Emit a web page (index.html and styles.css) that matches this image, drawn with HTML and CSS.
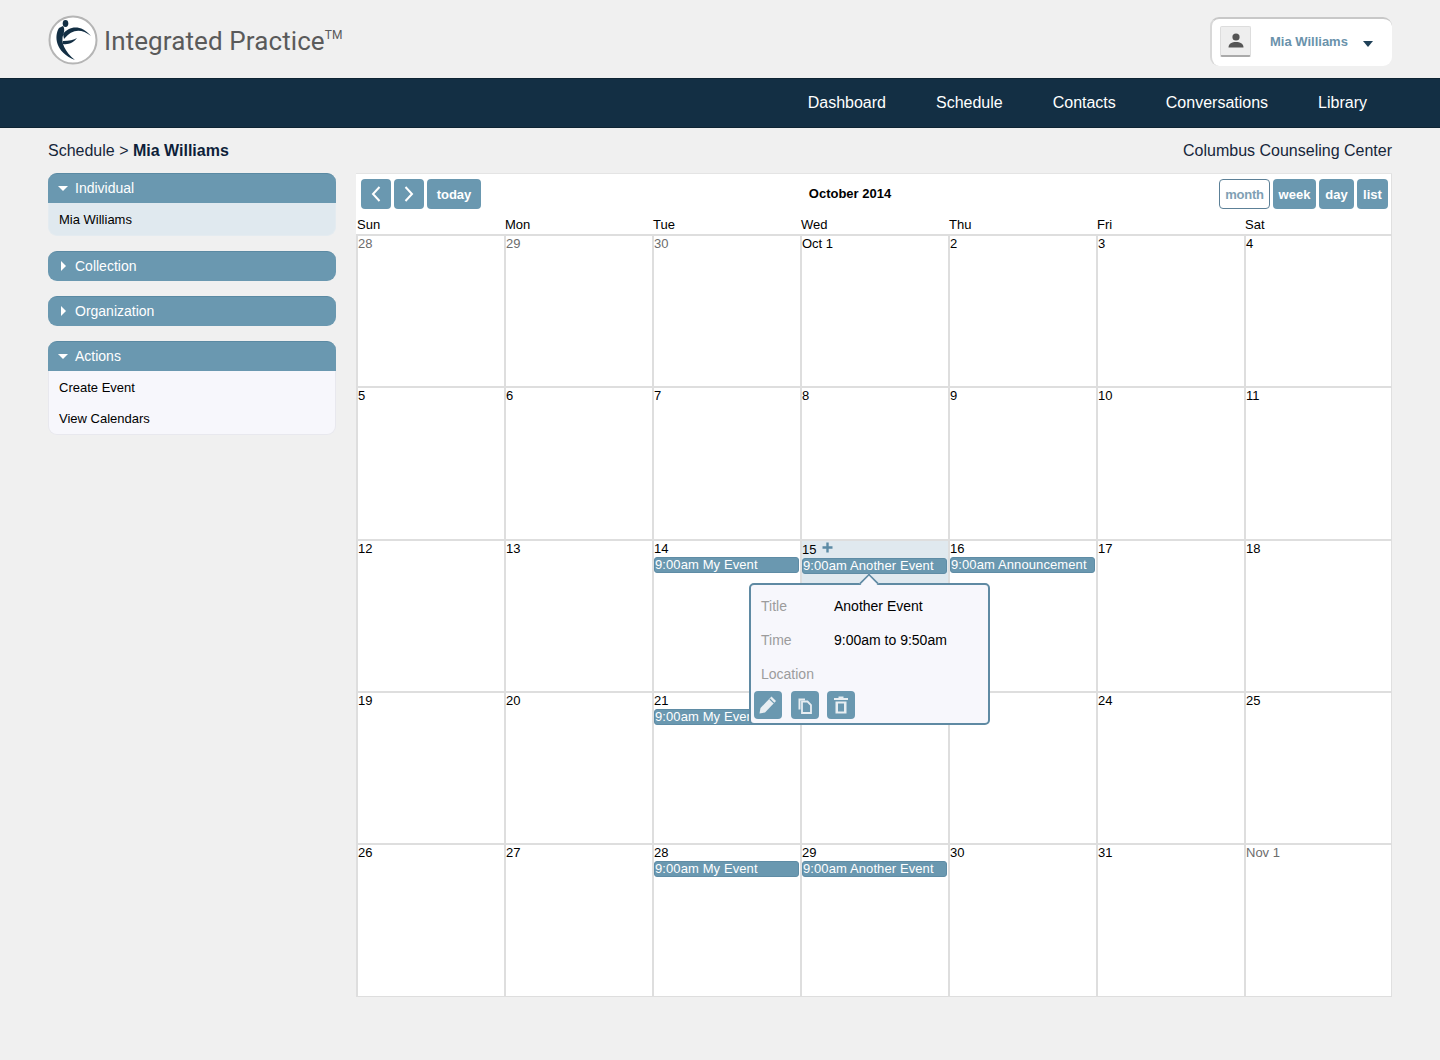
FILE: index.html
```html
<!DOCTYPE html>
<html lang="en">
<head>
<meta charset="utf-8">
<title>Integrated Practice - Schedule</title>
<link rel="stylesheet" href="styles.css">
</head>
<body>
<header class="top">
  <div class="brand">
    <svg class="logo" viewBox="0 0 50 50" width="50" height="50">
      <circle cx="25" cy="25" r="23.5" fill="#fff" stroke="#b5b5b5" stroke-width="2"/>
      <ellipse cx="17.5" cy="8.5" rx="2.8" ry="3.4" fill="#132f44"/>
      <path d="M11 13C6 21 7 37 27 45C17 37 12 27 15.5 19C17 15 16 12 15 11Z" fill="#132f44"/>
      <path d="M15 19C21 11 33 9 43 21C33 13 24 14 16 24Z" fill="#132f44"/>
      <path d="M15 29C21 30 26 27 29 23C26 25 21 26 15 26Z" fill="#132f44"/>
    </svg>
    <div class="brand-name">Integrated Practice<sup class="tm">TM</sup></div>
  </div>
  <div class="user">
    <div class="avatar">
      <svg viewBox="0 0 20 20" width="20" height="20"><circle cx="10" cy="6" r="3.6" fill="#555"/><path d="M2.5 16.5C2.5 12.5 6 11 10 11S17.500 12.500 17.500 16.500Z" fill="#555"/></svg>
    </div>
    <span class="user-name">Mia Williams</span>
    <span class="user-caret"></span>
  </div>
</header>
<nav class="nav">
  <a>Dashboard</a><a>Schedule</a><a>Contacts</a><a>Conversations</a><a>Library</a>
</nav>
<div class="crumbs">
  <div>Schedule &gt; <b>Mia Williams</b></div>
  <div>Columbus Counseling Center</div>
</div>
<main class="content">
  <aside class="side">
    <section class="panel">
      <h3 class="panel-head open"><i class="tri-down"></i>Individual</h3>
      <div class="panel-body tint"><a>Mia Williams</a></div>
    </section>
    <section class="panel">
      <h3 class="panel-head closed"><i class="tri-right"></i>Collection</h3>
    </section>
    <section class="panel">
      <h3 class="panel-head closed"><i class="tri-right"></i>Organization</h3>
    </section>
    <section class="panel">
      <h3 class="panel-head open"><i class="tri-down"></i>Actions</h3>
      <div class="panel-body"><a>Create Event</a><a>View Calendars</a></div>
    </section>
  </aside>
  <section class="cal">
    <div class="toolbar">
      <div class="btns">
        <button class="btn icon"><svg viewBox="0 0 16 20" width="16" height="20"><path d="M11.500 3L5 10L11.500 17" fill="none" stroke="#fff" stroke-width="2"/></svg></button>
        <button class="btn icon"><svg viewBox="0 0 16 20" width="16" height="20"><path d="M4.500 3L11 10L4.500 17" fill="none" stroke="#fff" stroke-width="2"/></svg></button>
        <button class="btn today">today</button>
      </div>
      <div class="cal-title">October 2014</div>
      <div class="btns">
        <button class="btn active month">month</button>
        <button class="btn week">week</button>
        <button class="btn day">day</button>
        <button class="btn list">list</button>
      </div>
    </div>
    <div class="dow"><div>Sun</div><div>Mon</div><div>Tue</div><div>Wed</div><div>Thu</div><div>Fri</div><div>Sat</div></div>
    <div class="grid">
      <div class="cell off"><span class="num">28</span></div>
      <div class="cell off"><span class="num">29</span></div>
      <div class="cell off"><span class="num">30</span></div>
      <div class="cell"><span class="num">Oct 1</span></div>
      <div class="cell"><span class="num">2</span></div>
      <div class="cell"><span class="num">3</span></div>
      <div class="cell"><span class="num">4</span></div>

      <div class="cell"><span class="num">5</span></div>
      <div class="cell"><span class="num">6</span></div>
      <div class="cell"><span class="num">7</span></div>
      <div class="cell"><span class="num">8</span></div>
      <div class="cell"><span class="num">9</span></div>
      <div class="cell"><span class="num">10</span></div>
      <div class="cell"><span class="num">11</span></div>

      <div class="cell"><span class="num">12</span></div>
      <div class="cell"><span class="num">13</span></div>
      <div class="cell"><span class="num">14</span><div class="ev">9:00am My Event</div></div>
      <div class="cell today-cell">
        <span class="num">15</span><svg class="plus" viewBox="0 0 11 11" width="11" height="11"><path d="M5.500 0.500V10.500M0.500 5.500H10.500" stroke="#5c8ba5" stroke-width="2.400"/></svg>
        <div class="ev">9:00am Another Event</div>
        <div class="pop">
          <span class="pop-arrow"></span>
          <dl class="pop-rows">
            <div class="pop-row"><dt>Title</dt><dd>Another Event</dd></div>
            <div class="pop-row"><dt>Time</dt><dd>9:00am to 9:50am</dd></div>
            <div class="pop-row"><dt>Location</dt><dd></dd></div>
          </dl>
          <div class="pop-actions">
            <button class="pop-btn"><svg viewBox="0 0 20 20" width="20" height="20"><path d="M13.500 1.500L18 6L7 17.500L1.500 18.500L2.500 13Z" fill="#e8eef2"/><path d="M11.800 4L16 8.200" stroke="#6a98b0" stroke-width="1.100"/></svg></button>
            <button class="pop-btn"><svg viewBox="0 0 20 20" width="20" height="20"><path d="M3.500 3.500H10V5.500H5.500V14.500H3.500Z" fill="#e8eef2"/><path d="M7 6.500H12.500L16 10V18H7Z" fill="none" stroke="#e8eef2" stroke-width="1.800"/></svg></button>
            <button class="pop-btn"><svg viewBox="0 0 20 20" width="20" height="20"><path d="M3 3H7.500V1.500H12.500V3H17V5H3Z" fill="#e8eef2"/><path d="M4.500 6.500H15.500V18.500H4.500ZM7 8.500V16.500H13V8.500Z" fill="#e8eef2" fill-rule="evenodd"/></svg></button>
          </div>
        </div>
      </div>
      <div class="cell"><span class="num">16</span><div class="ev">9:00am Announcement</div></div>
      <div class="cell"><span class="num">17</span></div>
      <div class="cell"><span class="num">18</span></div>

      <div class="cell"><span class="num">19</span></div>
      <div class="cell"><span class="num">20</span></div>
      <div class="cell"><span class="num">21</span><div class="ev">9:00am My Event</div></div>
      <div class="cell"><span class="num">22</span></div>
      <div class="cell"><span class="num">23</span></div>
      <div class="cell"><span class="num">24</span></div>
      <div class="cell"><span class="num">25</span></div>

      <div class="cell"><span class="num">26</span></div>
      <div class="cell"><span class="num">27</span></div>
      <div class="cell"><span class="num">28</span><div class="ev">9:00am My Event</div></div>
      <div class="cell"><span class="num">29</span><div class="ev">9:00am Another Event</div></div>
      <div class="cell"><span class="num">30</span></div>
      <div class="cell"><span class="num">31</span></div>
      <div class="cell off"><span class="num">Nov 1</span></div>
    </div>
  </section>
</main>
</body>
</html>
```

FILE: styles.css
```css
* { box-sizing: border-box; }
html, body { margin: 0; height: 1060px; }
body {
  background: #f0f0f0;
  color: #000;
  font: 13px/16px "Liberation Sans", Arial, sans-serif;
  overflow: hidden;
}
.top {
  height: 78px;
  padding: 17px 48px 0;
  display: flex;
  justify-content: space-between;
  align-items: flex-start;
}
.brand { display: flex; align-items: center; gap: 6px; margin-top: -2px; }
.logo { display: block; }
.brand-name {
  font: 26px/32px Roboto, sans-serif;
  color: #5a5a5a;
  white-space: nowrap;
  margin-top: 2px;
  letter-spacing: 0.1px;
}
.tm { font-size: 12px; line-height: 0; vertical-align: 11px; letter-spacing: 0; }
.user {
  width: 182px;
  height: 49px;
  background: #fff;
  border-radius: 9px;
  border-top: 2px solid #c8c8c8;
  border-left: 2px solid #d8d8d8;
  display: flex;
  align-items: center;
  padding: 0 0 2px 8px;
}
.avatar {
  width: 31px;
  height: 31px;
  background: #eee;
  border: 1px solid #ddd;
  border-bottom: 2px solid #aaa;
  border-radius: 2px;
  display: flex;
  align-items: center;
  justify-content: center;
}
.user-name { margin: 1px 0 0 19px; font-weight: bold; color: #6a92ab; font-size: 13px; }
.user-caret {
  margin: 4px 0 0 15px;
  border-top: 6px solid #1f4158;
  border-left: 5.5px solid transparent;
  border-right: 5.5px solid transparent;
}
.nav {
  height: 50px;
  background: #132f44;
  border-top: 1px solid #0e2433;
  border-bottom: 1px solid #0e2433;
  display: flex;
  justify-content: flex-end;
  align-items: center;
  gap: 50px;
  padding-right: 73px;
  color: #fff;
  font-size: 16px;
}
.crumbs {
  height: 45px;
  padding: 0 48px;
  display: flex;
  justify-content: space-between;
  align-items: center;
  font-size: 16px;
  color: #16263a;
}
.crumbs b { color: #0e1f3a; }
.content {
  padding: 0 48px;
  display: grid;
  grid-template-columns: 288px 1036px;
  gap: 20px;
  align-items: start;
}
.side { display: flex; flex-direction: column; gap: 15px; }
.panel-head {
  margin: 0;
  height: 30px;
  background: #6a98b0;
  color: #fff;
  font-size: 14px;
  font-weight: normal;
  display: flex;
  align-items: center;
  padding-bottom: 1px;
  border-top: 1px solid #5b8aa3;
}
.panel-head.open { border-radius: 9px 9px 0 0; padding-left: 10px; }
.panel-head.closed { border-radius: 9px; padding-left: 13px; }
.tri-down {
  margin-right: 7px;
  border-top: 5px solid #fff;
  border-left: 5.500px solid transparent;
  border-right: 5.500px solid transparent;
}
.tri-right {
  margin-right: 9px;
  border-left: 5px solid #fff;
  border-top: 5.500px solid transparent;
  border-bottom: 5.500px solid transparent;
}
.panel-body {
  background: #f7f7fc;
  border-radius: 0 0 9px 9px;
  border: 1px solid #e8e8ee;
  border-top: 0;
  padding: 1px 10px 0;
}
.panel-body.tint { background: #e0e9ef; border-color: #e4ebf0; height: 33px; }
.panel-body a { display: block; height: 31px; line-height: 32px; }
.cal {
  height: 824px;
  background: #fff;
  border-top: 1px solid #e4e4e4;
  border-bottom: 1px solid #dedede;
  box-shadow: inset -1px 0 #e0e0e0;
  display: flex;
  flex-direction: column;
}
.toolbar {
  height: 42px;
  padding: 5px 4px 0 5px;
  display: flex;
  justify-content: space-between;
  align-items: flex-start;
}
.btns { display: flex; gap: 3px; }
.btn {
  height: 30px;
  border: 0;
  border-radius: 4px;
  background: #6a98b0;
  color: #fff;
  font: bold 13px "Liberation Sans", Arial, sans-serif;
  padding: 0;
  display: flex;
  align-items: center;
  justify-content: center;
}
.btn.icon { width: 30px; }
.today { width: 54px; }
.month { width: 51px; }
.week { width: 43px; }
.day { width: 35px; }
.list { width: 31px; }
.btn.active { background: #fff; color: #7f9fb4; border: 1px solid #5c8097; letter-spacing: -0.2px; }
.cal-title { font-weight: bold; margin-top: 7px; }
.dow {
  height: 18px;
  display: grid;
  grid-template-columns: repeat(7, 1fr);
  line-height: 18px;
}
.dow div { padding-left: 1px; }
.grid {
  flex: 1;
  display: grid;
  grid-template-columns: repeat(7, 1fr);
  grid-template-rows: repeat(4, 152.3px) 1fr;
}
.cell {
  position: relative;
  border-top: 2px solid #dedede;
  border-left: 2px solid #dedede;
  min-width: 0;
}
.num { display: inline-block; line-height: 16px; }
.off .num { color: #6c6c6c; }
.ev {
  height: 16px;
  margin-right: 1px;
  background: #6a98b0;
  border: 1px solid #5f8ca5;
  border-radius: 3px;
  color: #fff;
  font-size: 13px;
  line-height: 14px;
  white-space: nowrap;
  overflow: hidden;
  letter-spacing: 0.1px;
  position: relative;
}
.today-cell { background: #e0e9ef; padding-top: 1px; }
.plus { margin-left: 6px; vertical-align: 1px; }
.pop {
  position: absolute;
  left: -53px;
  top: 42px;
  width: 241px;
  height: 142px;
  background: #f7f7fc;
  border: 2px solid #5f8aa3;
  border-radius: 5px;
  padding: 0 10px;
  z-index: 5;
  font-size: 14px;
}
.pop-arrow {
  position: absolute;
  left: 110px;
  top: -10px;
  width: 16px;
  height: 16px;
  background: #f7f7fc;
  border-top: 2px solid #5f8aa3;
  border-left: 2px solid #5f8aa3;
  transform: rotate(45deg) scale(0.85);
}
.pop-rows { margin: 0; padding-top: 4px; position: relative; }
.pop-row { display: flex; height: 34px; align-items: center; }
.pop-row dt { width: 73px; color: #9c9c9c; }
.pop-row dd { margin: 0; color: #000; }
.pop-actions { display: flex; gap: 8.500px; margin: 0 0 0 -7px; }
.pop-btn {
  width: 28px;
  height: 28px;
  border: 0;
  border-radius: 4px;
  background: #6a98b0;
  padding: 0;
  display: flex;
  align-items: center;
  justify-content: center;
}
```
